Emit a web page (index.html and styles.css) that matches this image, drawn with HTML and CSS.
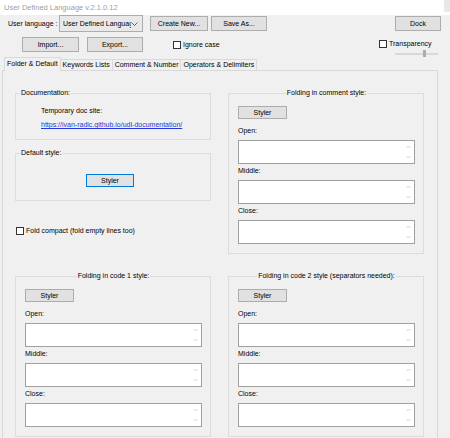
FILE: index.html
```html
<!DOCTYPE html>
<html lang="en">
<head>
  <meta charset="UTF-8" />
  <title>User Defined Language</title>
  <link rel="stylesheet" href="styles.css">
</head>
<body>

  <div class="titlebar">
    <span class="title">User Defined Language v.2.1.0.12</span>
    <span class="close-btn"></span>
  </div>

  <div class="top-row">
    <span class="lang-label">User language :</span>
    <div class="combo">
      <span class="combo-text">User Defined Language</span>
      <svg class="combo-arrow" width="7" height="4" viewBox="0 0 7 4"><polyline points="0.5,0.5 3.5,3.5 6.5,0.5" /></svg>
    </div>
    <button class="btn btn-create">Create New...</button>
    <button class="btn btn-save">Save As...</button>
    <button class="btn btn-dock">Dock</button>
  </div>

  <div class="second-row">
    <button class="btn btn-import">Import...</button>
    <button class="btn btn-export">Export...</button>
    <label class="check ignore-case"><span class="box"></span>Ignore case</label>
    <div class="transparency">
      <label class="check"><span class="box"></span>Transparency</label>
      <div class="slider"><span class="thumb"></span></div>
    </div>
  </div>

  <div class="tabs">
    <div class="tab active">Folder &amp; Default</div>
    <div class="tab">Keywords Lists</div>
    <div class="tab">Comment &amp; Number</div>
    <div class="tab">Operators &amp; Delimiters</div>
  </div>

  <div class="panel">
    <div class="left-top">
      <fieldset class="group doc-group">
        <legend>Documentation:</legend>
        <div class="doc-text">Temporary doc site:</div>
        <a class="doc-link" href="#">https://ivan-radic.github.io/udl-documentation/</a>
      </fieldset>
      <fieldset class="group default-group">
        <legend>Default style:</legend>
        <button class="btn styler focused">Styler</button>
      </fieldset>
      <label class="check fold-compact"><span class="box"></span>Fold compact (fold empty lines too)</label>
    </div>

    <fieldset class="group fold-group">
      <legend>Folding in comment style:</legend>
      <button class="btn styler">Styler</button>
      <div class="field-label">Open:</div>
      <div class="edit"><span class="spin"><svg width="5" height="4" viewBox="0 0 5 4"><polyline points="0.5,3 2.5,1 4.5,3" /></svg><svg width="5" height="4" viewBox="0 0 5 4"><polyline points="0.5,1 2.5,3 4.5,1" /></svg></span></div>
      <div class="field-label">Middle:</div>
      <div class="edit"><span class="spin"><svg width="5" height="4" viewBox="0 0 5 4"><polyline points="0.5,3 2.5,1 4.5,3" /></svg><svg width="5" height="4" viewBox="0 0 5 4"><polyline points="0.5,1 2.5,3 4.5,1" /></svg></span></div>
      <div class="field-label">Close:</div>
      <div class="edit"><span class="spin"><svg width="5" height="4" viewBox="0 0 5 4"><polyline points="0.5,3 2.5,1 4.5,3" /></svg><svg width="5" height="4" viewBox="0 0 5 4"><polyline points="0.5,1 2.5,3 4.5,1" /></svg></span></div>
    </fieldset>

    <fieldset class="group fold-group">
      <legend>Folding in code 1 style:</legend>
      <button class="btn styler">Styler</button>
      <div class="field-label">Open:</div>
      <div class="edit"><span class="spin"><svg width="5" height="4" viewBox="0 0 5 4"><polyline points="0.5,3 2.5,1 4.5,3" /></svg><svg width="5" height="4" viewBox="0 0 5 4"><polyline points="0.5,1 2.5,3 4.5,1" /></svg></span></div>
      <div class="field-label">Middle:</div>
      <div class="edit"><span class="spin"><svg width="5" height="4" viewBox="0 0 5 4"><polyline points="0.5,3 2.5,1 4.5,3" /></svg><svg width="5" height="4" viewBox="0 0 5 4"><polyline points="0.5,1 2.5,3 4.5,1" /></svg></span></div>
      <div class="field-label">Close:</div>
      <div class="edit"><span class="spin"><svg width="5" height="4" viewBox="0 0 5 4"><polyline points="0.5,3 2.5,1 4.5,3" /></svg><svg width="5" height="4" viewBox="0 0 5 4"><polyline points="0.5,1 2.5,3 4.5,1" /></svg></span></div>
    </fieldset>

    <fieldset class="group fold-group">
      <legend>Folding in code 2 style (separators needed):</legend>
      <button class="btn styler">Styler</button>
      <div class="field-label">Open:</div>
      <div class="edit"><span class="spin"><svg width="5" height="4" viewBox="0 0 5 4"><polyline points="0.5,3 2.5,1 4.5,3" /></svg><svg width="5" height="4" viewBox="0 0 5 4"><polyline points="0.5,1 2.5,3 4.5,1" /></svg></span></div>
      <div class="field-label">Middle:</div>
      <div class="edit"><span class="spin"><svg width="5" height="4" viewBox="0 0 5 4"><polyline points="0.5,3 2.5,1 4.5,3" /></svg><svg width="5" height="4" viewBox="0 0 5 4"><polyline points="0.5,1 2.5,3 4.5,1" /></svg></span></div>
      <div class="field-label">Close:</div>
      <div class="edit"><span class="spin"><svg width="5" height="4" viewBox="0 0 5 4"><polyline points="0.5,3 2.5,1 4.5,3" /></svg><svg width="5" height="4" viewBox="0 0 5 4"><polyline points="0.5,1 2.5,3 4.5,1" /></svg></span></div>
    </fieldset>
  </div>

</body>
</html>
```

FILE: styles.css
```css
html, body {
  overflow: hidden;
}

body {
  margin: 0;
  background: #f0f0f0;
  color: #000;
  font-family: "Liberation Sans", Arial, sans-serif;
  font-size: 7px;
  line-height: 10px;
}

.titlebar {
  display: flex;
  justify-content: space-between;
  height: 15px;
  background: #fff;
}

.title {
  padding-left: 4px;
  line-height: 15px;
  font-size: 7.5px;
  color: #a0a0a0;
}

.close-btn {
  width: 6px;
  height: 12px;
  background: #e8e8e8;
}

/* toolbar rows */
.top-row {
  display: flex;
  align-items: center;
  height: 17px;
  padding: 0 9px 0 8px;
}

.lang-label {
  width: 51px;
  white-space: nowrap;
}

.combo {
  display: flex;
  align-items: center;
  justify-content: space-between;
  box-sizing: border-box;
  width: 84px;
  height: 17px;
  padding: 0 4px 0 3px;
  background: #e9e9e9;
  border: 1px solid #adadad;
  overflow: hidden;
}

.combo-text {
  white-space: nowrap;
  overflow: hidden;
  width: 68px;
}

.combo-arrow polyline {
  fill: none;
  stroke: #555;
  stroke-width: 0.9;
}

.btn {
  box-sizing: border-box;
  height: 15px;
  padding: 0;
  font: inherit;
  color: #000;
  background: #e1e1e1;
  border: 1px solid #adadad;
}

.btn-create {
  width: 58px;
  margin-left: 7px;
}

.btn-save {
  width: 56px;
  margin-left: 3px;
}

.btn-dock {
  width: 46px;
  margin-left: auto;
}

.second-row {
  display: flex;
  align-items: flex-start;
  height: 20px;
  margin-top: 5px;
  padding-left: 22px;
}

.btn-import {
  width: 57px;
}

.btn-export {
  width: 56px;
  margin-left: 8px;
}

.check {
  display: flex;
  align-items: center;
  gap: 2px;
  height: 10px;
  white-space: nowrap;
}

.check .box {
  box-sizing: border-box;
  width: 8px;
  height: 8px;
  background: #fff;
  border: 1px solid #333;
}

.ignore-case {
  margin: 3px 0 0 30px;
}

.transparency {
  width: 59px;
  margin: 2px 12px 0 auto;
}

.slider {
  position: relative;
  width: 43px;
  height: 7px;
  margin: 1px 0 0 16px;
  background: linear-gradient(#d8d8d8, #d8d8d8) center / 100% 2px no-repeat;
}

.slider .thumb {
  position: absolute;
  left: 28px;
  top: 0;
  width: 3px;
  height: 7px;
  background: #acacac;
}

/* tabs */
.tabs {
  display: flex;
  align-items: flex-end;
  height: 13px;
  padding-left: 4px;
}

.tab {
  box-sizing: border-box;
  height: 11px;
  padding: 0 2px;
  margin-right: -1px;
  border: 1px solid #d9d9d9;
  border-bottom: none;
  line-height: 9px;
  white-space: nowrap;
}

.tab.active {
  position: relative;
  z-index: 1;
  height: 14px;
  margin-bottom: -1px;
  padding: 1px 2px 0;
  background: #f0f0f0;
}

.panel {
  display: grid;
  grid-template-columns: 196px 196px;
  column-gap: 17px;
  row-gap: 17px;
  align-items: start;
  width: 436px;
  box-sizing: border-box;
  margin-left: 2px;
  padding: 17px 0 20px 12px;
  border: 1px solid #d9d9d9;
}

/* group boxes */
.group {
  margin: 0;
  min-width: 0;
  border: 1px solid #dcdcdc;
}

.group legend {
  padding: 0 1px;
  line-height: 10px;
}

.doc-group {
  padding: 8px 4px 9px 4px;
}

.doc-text,
.doc-link {
  padding-left: 21px;
}

.doc-link {
  display: block;
  margin-top: 4px;
  color: #2438e0;
  white-space: nowrap;
}

.default-group {
  margin-top: 8px;
  padding: 16px 4px 13px 70px;
}

.default-group legend {
  margin-left: -66px;
}

.styler {
  display: block;
  width: 49px;
  height: 13px;
}

.styler.focused {
  width: 48px;
  border-color: #0078d7;
}

.fold-compact {
  margin: 25px 0 0 1px;
}

.fold-group {
  padding: 8px 8px 9px 9px;
}

.fold-group legend {
  margin: 0 auto;
}

.fold-group .styler {
  margin-bottom: 7px;
}

.field-label {
  height: 10px;
  margin-bottom: 4px;
}

.edit {
  display: flex;
  justify-content: flex-end;
  box-sizing: border-box;
  width: 177px;
  height: 24px;
  margin-bottom: 2px;
  background: #fff;
  border: 1px solid #a0a0a0;
}

.edit:last-child {
  margin-bottom: 0;
}

.spin {
  display: flex;
  flex-direction: column;
  justify-content: space-between;
  align-items: center;
  width: 12px;
  padding: 4px 0;
}

.spin svg {
  display: block;
}

.spin polyline {
  fill: none;
  stroke: #c6c6c6;
  stroke-width: 0.8;
}
```
